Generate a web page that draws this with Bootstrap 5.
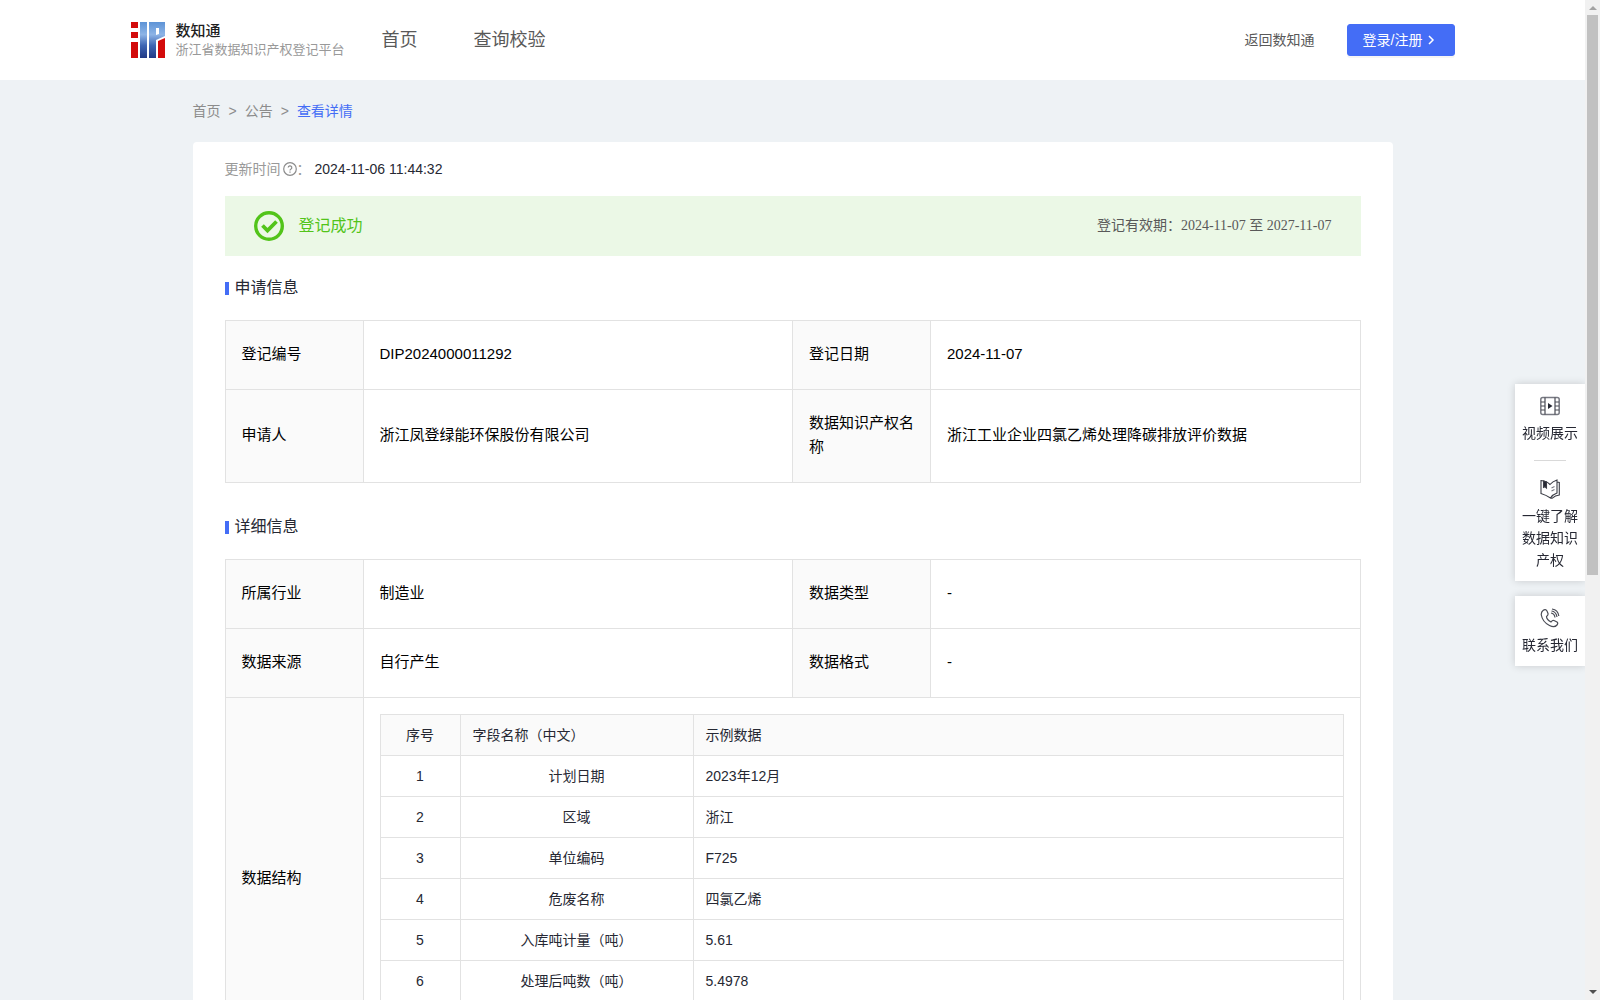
<!DOCTYPE html>
<html lang="zh-CN">
<head>
<meta charset="utf-8">
<meta name="viewport" content="width=device-width, initial-scale=1">
<title>数知通 - 查看详情</title>
<link rel="stylesheet" href="https://cdn.jsdelivr.net/npm/bootstrap@5.3.0/dist/css/bootstrap.min.css">
<style>
  :root { --brand: #446df6; --line: #e2e2e2; --ink: #262833; --tint: #fafafa; }
  body { font-family: "Liberation Sans", "Noto Sans CJK SC", sans-serif; font-size: 14px; line-height: 22px; color: var(--ink); }
  a { text-decoration: none; }
  .page-area { background: #eef2f5; min-width: 0; }
  .site-header { height: 80px; }
  .header-inner { max-width: 1324px; }
  .brand-link { gap: 11px; }
  .brand-name { font-size: 15px; line-height: 20px; font-weight: 500; color: #1f1f1f; }
  .brand-sub { font-size: 13px; line-height: 18px; color: #999; }
  .main-nav { gap: 56px; margin-left: 37px; font-size: 18px; }
  .main-nav a, .back-link { color: #595959; }
  .btn-login { --bs-btn-bg: var(--brand); --bs-btn-border-color: var(--brand); --bs-btn-color: #fff; --bs-btn-hover-bg: #3a60de; --bs-btn-hover-color: #fff;
    --bs-btn-font-size: 14px; --bs-btn-border-radius: 3px; height: 32px; width: 108px; padding: 0 15px; box-shadow: 0 2px 0 rgba(0,0,0,.04); }
  .content-wrap { max-width: 1200px; }
  .crumbs { height: 62px; --bs-breadcrumb-divider: ">"; --bs-breadcrumb-item-padding-x: 8px; --bs-breadcrumb-divider-color: #8c8c8c; --bs-breadcrumb-font-size: 14px; }
  .crumbs a { color: #8c8c8c; }
  .crumbs .active { color: var(--brand); }
  .detail-panel { border-radius: 4px; padding: 0 32px 32px; }
  .update-line { height: 54px; }
  .muted { color: #999; }
  .status-bar { height: 60px; background: #ebf8e6; padding: 0 29px; }
  .status-text { font-size: 16px; color: #52c41a; margin-left: 15px; }
  .valid-text { font-family: "Liberation Serif", "Noto Sans CJK SC", serif; color: #595959; }
  .section-title { height: 64px; font-size: 16px; line-height: 24px; font-weight: 400; }
  .section-title::before { content: ""; width: 4px; height: 13px; background: var(--brand); margin-right: 6px; }
  .info-table + .section-title { margin-top: 12px; }
  .info-table { table-layout: fixed; width: 100%; font-size: 15px; line-height: 24px; color: #000; }
  .info-table > tbody > tr > * { border: 1px solid var(--line); padding: 21px 16px 23px; vertical-align: middle; font-weight: 400; overflow-wrap: anywhere; }
  .info-table > tbody > tr > th { background: var(--tint); padding-right: 15px; }
  .info-table > tbody > tr > .nest { padding: 16px; }
  .label-col { width: 138px; }
  .field-table { table-layout: fixed; width: 100%; font-size: 14px; line-height: 22px; color: var(--ink); }
  .field-table th, .field-table td { border: 1px solid var(--line); padding: 0 12px; height: 41px; font-weight: 400; }
  .field-table thead th { background: var(--tint); }
  .field-table td:nth-child(-n+2) { text-align: center; }
  .no-col { width: 80px; }
  .name-col { width: 233px; }
  .side-tools { position: fixed; right: 15px; top: 384px; width: 70px; gap: 15px; }
  .tool-box { background: #fff; padding: 12px 6px 10px; box-shadow: 0 0 8px rgba(0,0,0,.16); clip-path: inset(-12px 0 -12px -12px); }
  .tool-box a { color: var(--ink); gap: 6px; }
  .tool-rule { width: 32px; border-top: 1px solid #d9d9d9; margin: 16px auto 18px; }
  .scroll-track { width: 15px; background: #f1f1f1; }
  .scroll-thumb { height: 56vh; background: #c1c1c1; margin: 0 2px; }
</style>
<script defer src="https://cdn.jsdelivr.net/npm/bootstrap@5.3.0/dist/js/bootstrap.bundle.min.js"></script>
</head>
<body>
<div class="d-flex vh-100 overflow-hidden">
  <div class="page-area flex-grow-1 overflow-hidden">
    <header class="site-header bg-white d-flex align-items-center">
      <div class="header-inner w-100 mx-auto d-flex align-items-center">
        <a href="#" class="brand-link d-flex align-items-center">
          <svg width="34" height="36" viewBox="0 0 34 36" aria-hidden="true">
            <defs><linearGradient id="blue" x1="0" y1="0" x2="0" y2="1"><stop offset="0" stop-color="#5d93d6"/><stop offset=".35" stop-color="#8db4e6"/><stop offset=".65" stop-color="#3f66b4"/><stop offset="1" stop-color="#223a86"/></linearGradient></defs>
            <path d="M0 0h7v6H0zM0 10h7v6H0zM0 20h7v16H0zM27 19l7-3v20h-7z" fill="#d30b0b"/>
            <path d="M9 0h7v36H9zM18 0h16v14l-9 4v18h-7zM25 6v7l3-1V6z" fill="url(#blue)" fill-rule="evenodd"/>
          </svg>
          <span class="d-flex flex-column">
            <span class="brand-name">数知通</span>
            <span class="brand-sub">浙江省数据知识产权登记平台</span>
          </span>
        </a>
        <nav class="main-nav d-flex"><a href="#">首页</a><a href="#">查询校验</a></nav>
        <a href="#" class="back-link ms-auto me-4 pe-2">返回数知通</a>
        <button type="button" class="btn btn-login d-flex align-items-center">登录/注册
          <svg class="ms-1" width="12" height="12" viewBox="0 0 12 12" fill="none" stroke="#fff" stroke-width="1.500"><path d="M3 2l4 4-4 4"/></svg>
        </button>
      </div>
    </header>

    <main class="content-wrap mx-auto">
      <nav aria-label="breadcrumb">
        <ol class="breadcrumb crumbs align-items-center mb-0">
          <li class="breadcrumb-item"><a href="#">首页</a></li>
          <li class="breadcrumb-item"><a href="#">公告</a></li>
          <li class="breadcrumb-item active" aria-current="page">查看详情</li>
        </ol>
      </nav>

      <div class="detail-panel bg-white">
        <div class="update-line d-flex align-items-center">
          <span class="muted">更新时间</span>
          <svg width="16" height="14" viewBox="-2 0 16 14" fill="none" stroke="#8c8c8c" stroke-width="1.200"><circle cx="7" cy="7" r="6.300"/><path d="M5.200 5.600a1.800 1.800 0 1 1 2.600 1.600q-.8.400-.8 1.200M7 9.500v1.200"/></svg>
          <span class="muted">：</span>
          <span class="ms-1">2024-11-06 11:44:32</span>
        </div>
        <div class="status-bar d-flex align-items-center">
          <svg width="30" height="30" viewBox="0 0 30 30" fill="none" stroke="#52c41a"><circle cx="15" cy="15" r="13.300" stroke-width="3.400"/><path d="M8.500 14.500l5 5 9-9" stroke-width="3.800"/></svg>
          <span class="status-text">登记成功</span>
          <span class="valid-text ms-auto">登记有效期：2024-11-07 至 2027-11-07</span>
        </div>

        <h2 class="section-title d-flex align-items-center mb-0">申请信息</h2>
        <table class="info-table">
          <colgroup><col class="label-col"><col><col class="label-col"><col></colgroup>
          <tbody>
            <tr><th scope="row">登记编号</th><td>DIP2024000011292</td><th scope="row">登记日期</th><td>2024-11-07</td></tr>
            <tr><th scope="row">申请人</th><td>浙江凤登绿能环保股份有限公司</td><th scope="row">数据知识产权名称</th><td>浙江工业企业四氯乙烯处理降碳排放评价数据</td></tr>
          </tbody>
        </table>

        <h2 class="section-title d-flex align-items-center mb-0">详细信息</h2>
        <table class="info-table">
          <colgroup><col class="label-col"><col><col class="label-col"><col></colgroup>
          <tbody>
            <tr><th scope="row">所属行业</th><td>制造业</td><th scope="row">数据类型</th><td>-</td></tr>
            <tr><th scope="row">数据来源</th><td>自行产生</td><th scope="row">数据格式</th><td>-</td></tr>
            <tr>
              <th scope="row">数据结构</th>
              <td colspan="3" class="nest">
                <table class="field-table">
                  <colgroup><col class="no-col"><col class="name-col"><col></colgroup>
                  <thead><tr><th scope="col" class="text-center">序号</th><th scope="col">字段名称（中文）</th><th scope="col">示例数据</th></tr></thead>
                  <tbody>
                    <tr><td>1</td><td>计划日期</td><td>2023年12月</td></tr>
                    <tr><td>2</td><td>区域</td><td>浙江</td></tr>
                    <tr><td>3</td><td>单位编码</td><td>F725</td></tr>
                    <tr><td>4</td><td>危废名称</td><td>四氯乙烯</td></tr>
                    <tr><td>5</td><td>入库吨计量（吨）</td><td>5.61</td></tr>
                    <tr><td>6</td><td>处理后吨数（吨）</td><td>5.4978</td></tr>
                    <tr><td></td><td></td><td></td></tr>
                  </tbody>
                </table>
              </td>
            </tr>
          </tbody>
        </table>
      </div>
    </main>
  </div>

  <aside class="side-tools d-flex flex-column text-center">
    <div class="tool-box">
      <a href="#" class="d-flex flex-column align-items-center">
        <svg width="20" height="20" viewBox="0 0 20 20" fill="none" stroke="#4a4c55" stroke-width="1.200"><rect x=".8" y="1.500" width="18.400" height="17" rx="2" stroke="#777982" stroke-width="1.500"/><path d="M5 1.500v17M15 1.500v17M1 6h4M1 10h4M1 14h4M15 6h4M15 10h4M15 14h4"/><path d="M8 7l4.500 3L8 13z" fill="#262833" stroke="none"/></svg>
        <span>视频展示</span>
      </a>
      <div class="tool-rule"></div>
      <a href="#" class="d-flex flex-column align-items-center">
        <svg width="20" height="20" viewBox="0 0 20 20" fill="none" stroke="#3a3c45" stroke-width="1.100"><path d="M1 1.500q5.500.500 9 4Q12.500 2.500 17 1v13q-4.500 1.500-6.500 5Q6 16 1 14.500zM17 3l2.300.5V16q-4 .3-7.300 3.300h-1.500" /><path d="M11.500 9l3-1.500M11.500 12l3-1.500" stroke="#777982"/><path d="M3.500 2l3 1v6L5 7.800 3.500 8.500z" fill="#262833"/></svg>
        <span>一键了解数据知识产权</span>
      </a>
    </div>
    <div class="tool-box">
      <a href="#" class="d-flex flex-column align-items-center">
        <svg width="20" height="20" viewBox="0 0 20 20" fill="none" stroke="#4a4c55" stroke-width="1.200"><path d="M3 2.500Q5.500.500 7 3l1 2.500q.5 1.500-1.500 3 0 3 4.500 5.500 1.500-2 3-1.500l3 1.500q1.500 1.200 0 3-2.500 3-7.500.500Q2.500 14 1.300 7 1 4 3 2.500zM11 5q3.500.500 4 4.500M11.500 3q4.500.500 5.500 6M12 1q6 .8 6.800 7"/></svg>
        <span>联系我们</span>
      </a>
    </div>
  </aside>

  <div class="scroll-track flex-shrink-0 d-flex flex-column" aria-hidden="true">
    <svg width="15" height="15" viewBox="0 0 15 15"><path d="M4 10l4-4 4 4z" fill="#a3a3a3"/></svg>
    <div class="scroll-thumb"></div>
    <svg class="mt-auto" width="15" height="15" viewBox="0 0 15 15"><path d="M4 5h8l-4 4z" fill="#505050"/></svg>
  </div>
</div>
</body>
</html>
